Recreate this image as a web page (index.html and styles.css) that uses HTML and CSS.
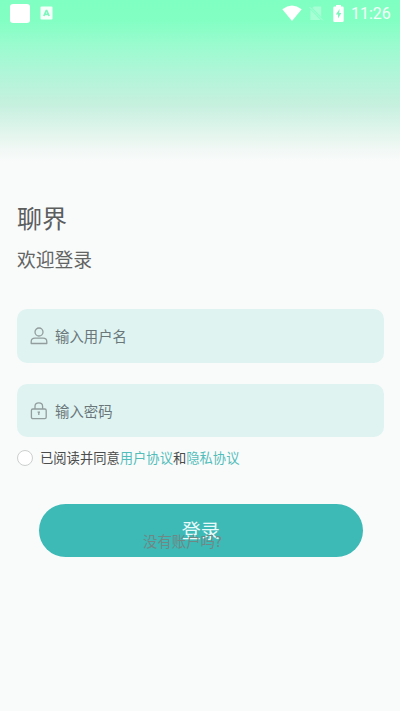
FILE: index.html
```html
<!DOCTYPE html>
<html lang="zh-CN">
<head>
<meta charset="utf-8">
<title>聊界</title>
<link rel="stylesheet" href="styles.css">
</head>
<body>
<div class="screen">
  <header class="status">
    <span class="app-square"></span>
    <svg class="app-a" width="13" height="14" viewBox="0 0 13 14"><rect x="0.5" y="0.5" width="12" height="13" rx="1" fill="#f4fffa"/><path d="M3.8 10L6.5 4L9.2 10M4.8 8.4H8.2" fill="none" stroke="#7df5bd" stroke-width="1.7" stroke-linejoin="bevel"/></svg>
    <svg class="wifi" width="20" height="17" viewBox="0 0 20 17"><path d="M0.3 4.2Q10 -3.2 19.7 4.2L10 16Z" fill="#fff"/></svg>
    <svg class="sim" width="15" height="15" viewBox="0 0 15 15"><path d="M4.8 .5H12.2V11L3.4 2ZM1.4 3.5L11.6 14H1.4Z" fill="#fff" opacity=".3"/><path d="M.5 1L13.8 14.3" stroke="#fff" stroke-opacity=".35" stroke-width="1"/></svg>
    <svg class="battery" width="11" height="17" viewBox="0 0 11 17"><path d="M3 0H8V1.5H9.5Q10.7 1.5 10.7 2.7V15.8Q10.7 17 9.5 17H1.5Q.3 17 .3 15.8V2.7Q.3 1.5 1.5 1.5H3Z" fill="#fff"/><path d="M6.6 4L2.8 9.4H5V13.6L8.3 8H6.2Z" fill="#7bf5bb"/></svg>
    <time class="clock">11:26</time>
  </header>
  <main class="login">
    <h1 class="title">聊界</h1>
    <p class="subtitle">欢迎登录</p>
    <div class="field">
      <svg class="icon" width="18" height="18" viewBox="0 0 18 18"><circle cx="9" cy="5" r="4"/><path d="M1.2 16.5V14.7Q1.2 11.2 5 11.2H13Q16.8 11.2 16.8 14.7V16.5Z"/></svg>
      <span>输入用户名</span>
    </div>
    <div class="field">
      <svg class="icon" width="18" height="18" viewBox="0 0 18 18"><rect x="1.4" y="7" width="14.8" height="9.7" rx="1.4"/><path d="M5 7V4.4Q5 .9 8.8 .9Q12.6 .9 12.6 4.4V7M7.6 10.2H10M8.8 10V13"/></svg>
      <span>输入密码</span>
    </div>
    <div class="agreement">
      <span class="radio"></span>
      <span>已阅读并同意<a class="link">用户协议</a>和<a class="link">隐私协议</a></span>
    </div>
    <div class="submit">
      <span>登录</span>
      <span class="register">没有账户吗?</span>
    </div>
  </main>
</div>
</body>
</html>
```
FILE: styles.css
```css
* {
  box-sizing: border-box;
}

body {
  margin: 0;
  font-family: "Noto Sans CJK SC", sans-serif;
}

.screen {
  width: 400px;
  height: 711px;
  overflow: hidden;
  background: linear-gradient(#80ffc2 0, #82ffc3 20px, #9bfbcf 46px, #b2f5d9 76px, #c7f0df 106px, #dff5eb 130px, #f1f8f5 149px, #f9fbfa 162px);
}

.status {
  display: flex;
  height: 28px;
  padding-left: 10px;
}

.app-square {
  width: 19.5px;
  height: 19px;
  margin-top: 4px;
  border-radius: 3px;
  background: #fff;
}

.app-a {
  margin: 6px 0 0 10.5px;
}

.wifi {
  margin: 5px 0 0 229px;
}

.sim {
  margin: 6px 0 0 7px;
}

.battery {
  margin: 5px 0 0 9px;
}

.clock {
  margin: 4px 0 0 7px;
  color: #f3fff9;
  font: 16px/20px Roboto, sans-serif;
}

.login {
  padding: 171px 16px 0 17px;
}

.title {
  margin: 0;
  color: #5c5e5e;
  font-size: 25px;
  font-weight: 400;
  line-height: 36px;
}

.subtitle {
  margin: 10px 0 36.4px;
  color: #626464;
  font-size: 18.8px;
  line-height: 28px;
}

.field {
  display: flex;
  align-items: center;
  height: 53.6px;
  margin-bottom: 20.8px;
  padding-left: 13px;
  border-radius: 10px;
  background: #dff3f1;
  color: #69777b;
  font-size: 14.4px;
  line-height: 22px;
}

.icon {
  margin-right: 7px;
  fill: none;
  stroke: #929d9d;
  stroke-width: 1.3;
  stroke-linejoin: round;
}

.agreement {
  display: flex;
  align-items: center;
  height: 20px;
  margin-top: -10.6px;
  color: #4a4b4b;
  font-size: 13.3px;
  line-height: 20px;
}

.radio {
  width: 16px;
  height: 16px;
  margin-right: 7px;
  border: 1px solid #cdcfcf;
  border-radius: 50%;
  background: #fff;
}

.link {
  color: #53bdba;
}

.submit {
  position: relative;
  display: flex;
  align-items: center;
  justify-content: center;
  width: 324.5px;
  height: 53px;
  margin: 36.2px 0 0 21.5px;
  border-radius: 27px;
  background: #3db9b6;
  color: #e9fbfa;
  font-size: 19px;
  line-height: 28px;
}

.register {
  position: absolute;
  top: 26px;
  left: 104.5px;
  color: #6f8886;
  font-size: 14.4px;
  line-height: 22px;
  white-space: nowrap;
}
```
